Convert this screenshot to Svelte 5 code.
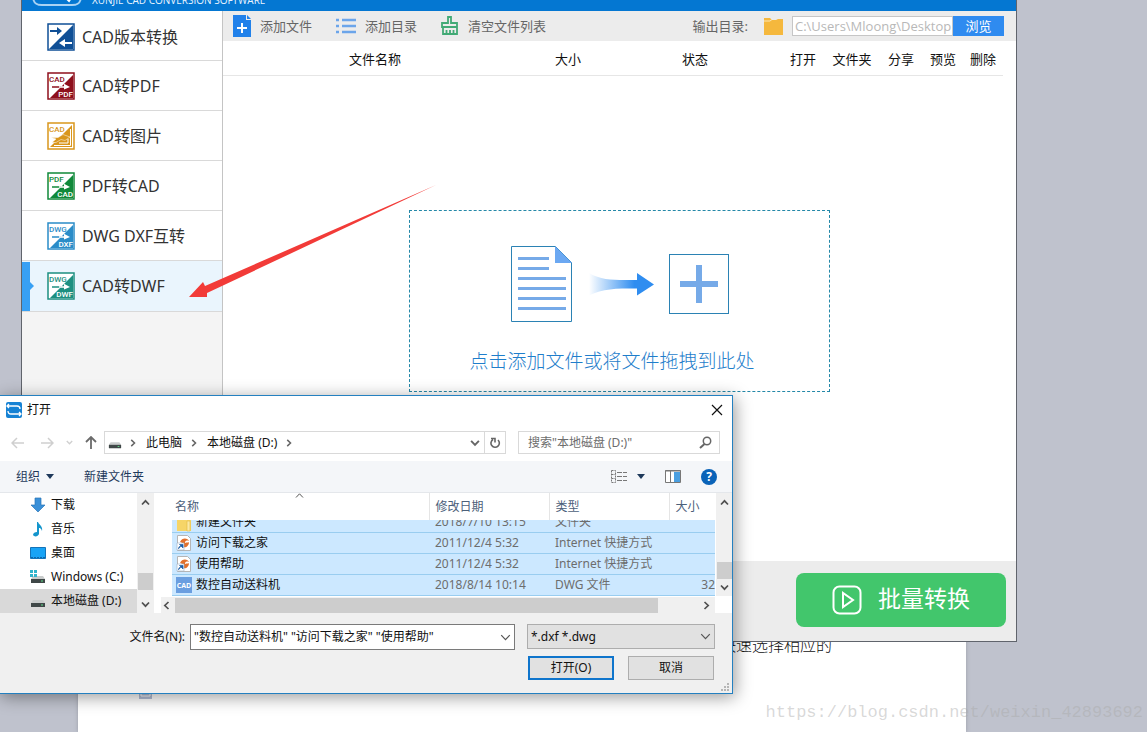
<script>
  const modes = [
    { label: 'CAD版本转换', color: '#0f4f96', kind: 'swap' },
    { label: 'CAD转PDF', color: '#8e0f1c', from: 'CAD', to: 'PDF' },
    { label: 'CAD转图片', color: '#d9961c', from: 'CAD', kind: 'image' },
    { label: 'PDF转CAD', color: '#10893a', from: 'PDF', to: 'CAD' },
    { label: 'DWG DXF互转', color: '#2a8cc8', from: 'DWG', to: 'DXF' },
    { label: 'CAD转DWF', color: '#1d8f80', from: 'DWG', to: 'DWF' }
  ];
  let active = $state(5);

  const columns = ['文件名称', '大小', '状态', '打开', '文件夹', '分享', '预览', '删除'];

  const places = [
    { label: '下载', icon: 'download' },
    { label: '音乐', icon: 'music' },
    { label: '桌面', icon: 'desktop' },
    { label: 'Windows (C:)', icon: 'system' },
    { label: '本地磁盘 (D:)', icon: 'drive' }
  ];
  let place = $state(4);

  const files = [
    { name: '新建文件夹', date: '2018/7/10 13:15', type: '文件夹', size: '', icon: 'folder' },
    { name: '访问下载之家', date: '2011/12/4 5:32', type: 'Internet 快捷方式', size: '', icon: 'link' },
    { name: '使用帮助', date: '2011/12/4 5:32', type: 'Internet 快捷方式', size: '', icon: 'link' },
    { name: '数控自动送料机', date: '2018/8/14 10:14', type: 'DWG 文件', size: '32', icon: 'cad' }
  ];

  let outputDir = $state('C:\\Users\\Mloong\\Desktop');
  let fileName = $state('"数控自动送料机" "访问下载之家" "使用帮助"');
</script>

{#snippet chevron(dir, size = 9)}
  <svg class="chev {dir}" width={size} height={size} viewBox="0 0 9 9" aria-hidden="true">
    <path d="M1 2.5 4.5 6.2 8 2.5" fill="none" stroke="currentColor" stroke-width="1.7" />
  </svg>
{/snippet}

{#snippet drive()}
  <path d="M3 7h10l2 3H1z" fill="#c9cccc" />
  <path d="M1 10h14v4H1z" fill="#3f4747" />
  <path d="M11 12h2" stroke="#5fe08a" stroke-width="1" />
{/snippet}

<div class="desktop">
  <div class="paper">
    <p>快速选择相应的</p>
    <svg class="anchor" width="13" height="7" viewBox="0 0 13 7" aria-hidden="true">
      <path d="M0 0h13v7H0z" fill="#b3bed6" /><path d="M2 2v2h9V2" fill="none" stroke="#fff" />
    </svg>
  </div>

  <main class="app">
    <header class="brand">
      <svg width="50" height="11" viewBox="0 0 50 11" aria-hidden="true">
        <path d="M1-4C1 3 4 5 10 5h30c6 0 9-2 9-9" fill="none" stroke="#a9d2f3" stroke-width="2" />
        <path d="M33-3l4 4 2-3" fill="none" stroke="#fff" stroke-width="2" />
      </svg>
      <span>XUNJIE CAD CONVERSION SOFTWARE</span>
    </header>

    <div class="body">
      <nav class="modes">
        {#each modes as m, i}
          <button class="mode" class:active={active === i} onclick={() => (active = i)}>
            <svg width="28" height="28" viewBox="0 0 28 28" aria-hidden="true">
              <rect x="1" y="1" width="26" height="26" fill="#fff" stroke={m.color} stroke-width="1.5" />
              {#if m.kind === 'swap'}
                <path d="M26 2v24H2z" fill={m.color} />
                <path d="M3 7h7V4l5 4-5 4V9H3z" fill={m.color} />
                <path d="M25 19h-7v-3l-6 4 6 4v-3h7z" fill="#fff" />
              {:else if m.kind === 'image'}
                <path d="M25 3v22H3z" fill={m.color} />
                <path d="M23.500 7v16.500H7M21 17v4H12" fill="none" stroke="#fff" />
                <path d="M4 15.500h7l5-3 7 2.500-5 3.500-4-1-5 3H5l4-3.500z" fill={m.color} stroke="#fff" stroke-width=".5" />
                <text x="2" y="9.500" fill={m.color}>{m.from}</text>
              {:else}
                <path d="M26 3v23H3z" fill={m.color} />
                <path d="M5 15h9" stroke={m.color} stroke-width="1.500" />
                <path d="M12 14.300h5v-2.600l6 3.300-6 2.500v-1.800h-5z" fill="#fff" />
                <text x="2" y="9.500" fill={m.color}>{m.from}</text>
                <text x="26" y="25" text-anchor="end" fill="#fff">{m.to}</text>
              {/if}
            </svg>
            <span>{m.label}</span>
          </button>
        {/each}
      </nav>

      <section class="work">
        <div class="toolbar">
          <button>
            <svg width="18" height="22" viewBox="0 0 18 22" aria-hidden="true">
              <path d="M0 0h13v5h5v17H0z" fill="#2181ea" /><path d="M14 0l4 4h-4z" fill="#2181ea" />
              <path d="M9 8v10M4 13h10" stroke="#fff" stroke-width="2" />
            </svg>添加文件
          </button>
          <button>
            <svg width="20" height="16" viewBox="0 0 20 16" aria-hidden="true">
              <path d="M0 2h3M0 8h3M0 14h3M6 2h14M6 8h14M6 14h14" stroke="#6ba5ea" stroke-width="2.500" />
            </svg>添加目录
          </button>
          <button>
            <svg width="18" height="20" viewBox="0 0 18 20" aria-hidden="true">
              <path d="M7 7V1h3v6h6v4H1V7zM2 11v7h14v-7M5.500 18v-4M9 18v-4M12.500 18v-4" fill="none" stroke="#42aa76" stroke-width="1.800" />
            </svg>清空文件列表
          </button>
          <label class="out" for="outdir">输出目录:</label>
          <svg class="folder" width="20" height="17" viewBox="0 0 20 17" aria-hidden="true">
            <path d="M0 2V0h6l2 2h4l2-1h5v16H0z" fill="#f5b83d" /><path d="M0 3h6l2-1.500" fill="none" stroke="#fde6b4" />
          </svg>
          <input id="outdir" bind:value={outputDir} />
          <button class="browse">浏览</button>
        </div>

        <table class="queue">
          <colgroup>
            <col /><col class="c-size" /><col class="c-state" /><col class="c-open" /><col class="c-dir" />
            <col class="c-open" /><col class="c-view" /><col class="c-view" />
          </colgroup>
          <thead><tr>{#each columns as c}<th>{c}</th>{/each}</tr></thead>
        </table>

        <div class="stage">
          <button class="drop">
            <svg width="220" height="78" viewBox="0 0 220 78" aria-hidden="true">
              <defs>
                <linearGradient id="fade"><stop offset="0" stop-color="#2f8df0" stop-opacity="0" /><stop offset=".7" stop-color="#2f8df0" /></linearGradient>
              </defs>
              <path d="M2 1.500h43.500l16 16v59h-60v-75z" fill="#fff" stroke="#2b82b4" />
              <path d="M45 1l17 17H45z" fill="#6ba8f2" />
              <path d="M8 13.500h31M8 23.500h31M8 33.500h48M8 43.500h48M8 53.500h48M8 63.500h48" stroke="#76aae8" stroke-width="3" />
              <path d="M79 28c14 8 26 7 48 7v-7l17 11.500-17 11v-7c-22 0-34 0-48 7z" fill="url(#fade)" />
              <rect x="159.500" y="9.500" width="59" height="59" fill="#fff" stroke="#2b82b4" />
              <path d="M189 20v38M170 39h38" stroke="#76aae8" stroke-width="6" />
            </svg>
            <span>点击添加文件或将文件拖拽到此处</span>
          </button>
        </div>

        <footer class="actions">
          <button class="convert">
            <svg width="30" height="30" viewBox="0 0 30 30" fill="none" stroke="#fff" stroke-width="2" aria-hidden="true">
              <rect x="1.500" y="1.500" width="27" height="27" rx="6" /><path d="M11 8v14l10-7z" />
            </svg>
            <span>批量转换</span>
          </button>
        </footer>
      </section>
    </div>
  </main>

  <svg class="pointer" width="250" height="116" viewBox="0 0 250 116" aria-hidden="true">
    <path d="M1 113 15 98l2 4L248 1 19 109v4z" fill="#f23b38" />
  </svg>

  <div class="watermark">https://blog.csdn.net/weixin_42893692</div>

  <section class="dialog" role="dialog" aria-labelledby="dlg-title">
    <header class="title">
      <svg width="16" height="16" viewBox="0 0 16 16" aria-hidden="true">
        <rect width="16" height="16" rx="2" fill="#1682d4" />
        <path d="M3 2 1 4l2 2M1 4h10c2 0 3 1 3 3M13 10l2 2-2 2M15 12H5c-2 0-3-1-3-3" fill="none" stroke="#fff" stroke-width="1.300" />
      </svg>
      <h1 id="dlg-title">打开</h1>
      <button class="close" aria-label="关闭">
        <svg width="12" height="12" viewBox="0 0 12 12"><path d="M1 1l10 10M11 1 1 11" stroke="#111" stroke-width="1.200" /></svg>
      </button>
    </header>

    <div class="address">
      <div class="history">
        <button aria-label="后退"><svg width="13" height="12" viewBox="0 0 13 12"><path d="M6 1 1 6l5 5M1 6h12" fill="none" stroke="#cfcfcf" stroke-width="1.500" /></svg></button>
        <button aria-label="前进"><svg width="13" height="12" viewBox="0 0 13 12"><path d="M7 1l5 5-5 5M12 6H0" fill="none" stroke="#cfcfcf" stroke-width="1.500" /></svg></button>
        <button class="faint" aria-label="最近位置">{@render chevron('down', 7)}</button>
        <button aria-label="向上"><svg width="12" height="13" viewBox="0 0 12 13"><path d="M1 6l5-5 5 5M6 1v12" fill="none" stroke="#6b6b6b" stroke-width="1.800" /></svg></button>
      </div>
      <div class="path">
        <svg width="14" height="16" viewBox="0 0 16 16" aria-hidden="true">{@render drive()}</svg>
        {@render chevron('right', 8)}<span>此电脑</span>
        {@render chevron('right', 8)}<span>本地磁盘 (D:)</span>
        {@render chevron('right', 8)}
        <button class="drop-path" aria-label="展开">{@render chevron('down', 10)}</button>
        <button class="refresh" aria-label="刷新">
          <svg width="11" height="12" viewBox="0 0 11 12"><path d="M3 2.500A4.200 4.200 0 1 0 8 3M1 1.500h4v4" fill="none" stroke="#666" stroke-width="1.600" /></svg>
        </button>
      </div>
      <div class="search">
        <input aria-label="搜索" placeholder={'搜索"本地磁盘 (D:)"'} />
        <svg width="13" height="13" viewBox="0 0 13 13" aria-hidden="true"><circle cx="8" cy="5" r="3.700" fill="none" stroke="#666" stroke-width="1.500" /><path d="M5.500 8 1 12" stroke="#666" stroke-width="2" /></svg>
      </div>
    </div>

    <div class="commands">
      <button>组织<i class="tri"></i></button>
      <button>新建文件夹</button>
      <button class="views" aria-label="视图">
        <svg width="17" height="13" viewBox="0 0 17 13"><path d="M.5.5h4v12h-4zM.5 4.500h4M.5 8.500h4" fill="none" stroke="#777" stroke-dasharray="2 1" /><path d="M6 2.500h5M12 2.500h4M6 6.500h5M12 6.500h4M6 10.500h5M12 10.500h4" stroke="#777" /></svg>
        <i class="tri"></i>
      </button>
      <button aria-label="预览窗格"><svg width="16" height="13" viewBox="0 0 16 13"><path d="M.5.5h15v12H.5z" fill="#fff" stroke="#777" /><path d="M0 1h16M5.500 1v11" stroke="#777" /><path d="M9 2h6v10H9z" fill="#4a9fe0" /></svg></button>
      <button class="help" aria-label="帮助">?</button>
    </div>

    <div class="browser">
      <nav class="places">
        {#each places as p, i}
          <button class:current={place === i} onclick={() => (place = i)}>
            <svg width="16" height="16" viewBox="0 0 16 16" aria-hidden="true">
              {#if p.icon === 'download'}
                <path d="M5 1h6v7h4l-7 7-7-7h4z" fill="#3a90d8" stroke="#2a75b8" stroke-width=".7" />
              {:else if p.icon === 'music'}
                <path d="M8 1c1 3 5 4 4 9-1-3-2-3-3-3v6c-1 3-5 3-6 1 0-2 2-3 4-3V1z" fill="#1495cc" />
              {:else if p.icon === 'desktop'}
                <path d="M.5 2.500h15v11H.5z" fill="#18a3f5" stroke="#1473b8" /><path d="M1 12.500h14" stroke="#0c67ab" stroke-dasharray="2 1" />
              {:else}
                {@render drive()}
                {#if p.icon === 'system'}<path d="M0 1h3v3H0zM4 1h3v3H4zM0 5h3v3H0zM4 5h3v3H4z" fill="#31b4cc" />{/if}
              {/if}
            </svg>
            <span>{p.label}</span>
          </button>
        {/each}
      </nav>
      <div class="vbar">{@render chevron('up')}<i></i>{@render chevron('down')}</div>

      <div class="files">
        <span class="sort">{@render chevron('up thin')}</span>
        <table>
          <colgroup><col /><col class="f-mid" /><col class="f-mid" /><col class="f-size" /></colgroup>
          <thead><tr><th>名称</th><th>修改日期</th><th>类型</th><th>大小</th></tr></thead>
          <tbody>
            {#each files as f, i}
              <tr class:cut={i === 0}>
                <td><div class="cell name">
                  <svg width="16" height="16" viewBox="0 0 16 16" aria-hidden="true">
                    {#if f.icon === 'folder'}
                      <path d="M1 1h9l1 2h4v12H1z" fill="#f6d568" /><path d="M11 5h3v10h-3z" fill="#fbe9a4" stroke="#e3b83c" stroke-width=".6" />
                    {:else if f.icon === 'link'}
                      <path d="M1.500.5h10l3 3v12h-13z" fill="#fff" stroke="#b5b5b5" />
                      <path d="M4 7c2-5 8-4 9-1-3-1-4 0-4 2 2-1 3 0 4-1 0 4-3 6-6 5 1-2 1-4-3-5z" fill="#e2702c" />
                      <path d="M1 8h7v7H1z" fill="#fff" stroke="#9bb0c8" stroke-width=".6" /><path d="M2.500 14c0-2 1-3 3-3M3.500 9.500H7V13z" stroke="#1e5fa8" fill="#1e5fa8" stroke-width=".7" />
                    {:else}
                      <path d="M0 0h16v16H0z" fill="#6a9ee0" /><text class="badge" x="8" y="11" text-anchor="middle" fill="#fff">CAD</text>
                    {/if}
                  </svg><span>{f.name}</span>
                </div></td>
                <td><div class="cell">{f.date}</div></td>
                <td><div class="cell">{f.type}</div></td>
                <td><div class="cell size">{f.size}</div></td>
              </tr>
            {/each}
          </tbody>
        </table>
        <div class="hbar">{@render chevron('left')}<i></i>{@render chevron('right')}</div>
      </div>
      <div class="vbar right">{@render chevron('up')}<i></i>{@render chevron('down')}</div>
    </div>

    <footer class="confirm">
      <div class="fields">
        <label for="fname">文件名(N):</label>
        <div class="combo"><input id="fname" bind:value={fileName} />{@render chevron('down thin', 11)}</div>
        <div class="filter">
          <select aria-label="文件类型"><option>*.dxf *.dwg</option></select>
          {@render chevron('down thin', 11)}
        </div>
      </div>
      <div class="buttons">
        <button class="primary">打开(O)</button>
        <button>取消</button>
      </div>
      <svg class="grip" width="8" height="8" viewBox="0 0 8 8" aria-hidden="true"><path d="M6 0h2v2H6zM3 3h2v2H3zM6 3h2v2H6zM0 6h2v2H0zM3 6h2v2H3zM6 6h2v2H6z" fill="#b5b5b5" /></svg>
    </footer>
  </section>
</div>

<style>
  :global(body) { margin: 0; }
  .desktop, .desktop * { box-sizing: border-box; }
  .desktop {
    position: relative;
    height: 100vh;
    overflow: hidden;
    background: #bfc2cd;
    color: #111;
    font: 12px/20px "Noto Sans", "Noto Sans CJK SC", sans-serif;
  }
  button, input, select { font: inherit; color: inherit; margin: 0; padding: 0; border: 0; background: none; border-radius: 0; outline: 0; }
  button { display: flex; align-items: center; white-space: nowrap; }
  svg { display: block; flex: none; }

  .paper { position: absolute; left: 78px; right: 181px; top: 0; bottom: 0; background: #fff; box-shadow: 0 0 4px #9a9da8; }
  .paper p { position: absolute; right: 134px; top: 633px; margin: 0; font-size: 16px; line-height: 24px; font-weight: 300; color: #111; }
  .anchor { position: absolute; left: 61px; top: 692px; }
  .watermark { position: absolute; right: 4px; bottom: 7px; font: 17px/24px "Liberation Mono", monospace; color: rgba(170, 170, 170, .45); }

  .app {
    position: absolute; left: 21px; right: 130px; top: 0; bottom: 90px;
    display: flex; flex-direction: column;
    border: 1px solid #60646c; border-top: 0; background: #fff;
  }
  .brand { display: flex; height: 11px; padding-left: 10px; gap: 10px; background: #0477d2; overflow: hidden; }
  .brand span { font-family: "Open Sans", sans-serif; font-size: 10px; line-height: 14px; margin-top: -7px; color: #e8f4ff; white-space: nowrap; }
  .body { flex: 1; display: flex; min-height: 0; }

  .modes { width: 201px; flex: none; background: #f4f4f4; border-right: 1px solid #c4c4c4; }
  .mode {
    position: relative; width: 100%; height: 50px; padding-left: 25px; gap: 7px;
    background: #fff; border-bottom: 1px solid #d9d9d9; font-size: 16px; color: #333;
  }
  .mode:first-child { padding-top: 2px; }
  .mode.active { height: 51px; background: #eaf5fd; }
  .mode.active::before { content: ""; position: absolute; left: 0; top: 1px; bottom: 0; width: 8px; background: #38a0f4; }
  .mode.active::after { content: ""; position: absolute; left: 8px; top: 21px; border: 4px solid transparent; border-left-color: #38a0f4; border-right: 0; }
  .mode text { font: 500 8px Roboto, sans-serif; }

  .work { flex: 1; min-width: 0; display: flex; flex-direction: column; }
  .toolbar { display: flex; align-items: center; height: 30px; padding: 0 12px 0 10px; gap: 24px; background: #ececec; font-size: 13px; color: #666; }
  .toolbar button { gap: 9px; }
  .out { margin-left: auto; }
  .folder { margin-left: -8px; }
  .toolbar input { width: 161px; height: 20px; margin: 0 -24px 0 -16px; padding: 0 0 0 2px; border: 1px solid #c6c6c6; background: #fff; color: #b8b8b8; font-family: "Open Sans", sans-serif; }
  .toolbar .browse { width: 51px; height: 20px; justify-content: center; background: #2f8bf0; color: #fff; }

  .queue { width: calc(100% - 13px); table-layout: fixed; border-collapse: collapse; font-size: 13px; }
  .queue th { height: 34px; padding: 2px 0 0; border-bottom: 1px solid #e6e6e6; font-weight: 400; text-align: center; white-space: nowrap; }
  .c-size { width: 82px; } .c-state { width: 172px; } .c-open { width: 44px; } .c-dir { width: 54px; } .c-view { width: 40px; }

  .stage { flex: 1; display: flex; align-items: center; justify-content: center; padding-bottom: 34px; }
  .drop { width: 53%; height: 182px; flex-direction: column; justify-content: center; gap: 24px; padding-top: 17px; border: 1px dashed #2488a8; }
  .drop span { padding-right: 15px; font-size: 19px; line-height: 28px; color: #1f7ecb; font-weight: 300; }

  .actions { display: flex; justify-content: flex-end; height: 80px; padding: 12px 10px; background: #ececec; }
  .convert { width: 210px; height: 54px; justify-content: center; gap: 16px; border-radius: 8px; background: #42c66c; color: #fff; font-size: 23px; }
  .convert span { line-height: 28px; padding-bottom: 4px; }

  .pointer { position: absolute; left: 188px; top: 184px; }

  .dialog {
    position: absolute; left: -1px; right: 414px; top: 395px;
    border: 1px solid #2480c0; background: #fff; box-shadow: 2px 3px 16px rgba(0, 0, 0, .4);
  }
  .title { display: flex; align-items: center; height: 28px; padding: 0 9px 0 6px; gap: 5px; }
  .title h1 { margin: 0; font-size: 12px; font-weight: 400; }
  .close { margin-left: auto; }

  .address { display: flex; align-items: center; height: 37px; padding: 0 12px 0 11px; }
  .history { display: grid; grid-template-columns: 30px 25px 19px 19px; align-items: center; }
  .faint { color: #d0d0d0; }
  .path, .search { display: flex; align-items: center; height: 23px; border: 1px solid #d9d9d9; }
  .path { flex: 1; gap: 7px; padding-left: 3px; color: #666; }
  .path span { color: #111; margin: 0 1px 0 2px; white-space: nowrap; }
  .drop-path { margin-left: auto; }
  .refresh { width: 21px; height: 100%; justify-content: center; margin-left: -3px; border-left: 1px solid #d9d9d9; }
  .search { width: 202px; margin-left: 12px; padding: 0 7px 0 9px; }
  .search input { flex: 1; min-width: 0; }
  .search input::placeholder { color: #6d6d6d; opacity: 1; }

  .chev { overflow: visible; }
  .up { rotate: 180deg; } .right.chev { rotate: -90deg; } .left { rotate: 90deg; }
  .thin { color: #555; }
  .thin path { stroke-width: 1; }

  .commands { display: flex; align-items: center; height: 32px; padding: 0 15px 0 16px; background: #f4f6f9; border-bottom: 1px solid #e4e7eb; color: #1e395b; }
  .commands button + button { margin-left: 20px; }
  .commands button:nth-child(2) { margin-left: 30px; }
  .commands .views { margin-left: auto; gap: 3px; }
  .tri { margin-left: 6px; border: 4px solid transparent; border-top: 5px solid #1e395b; border-bottom: 0; }
  .commands .help { width: 16px; height: 16px; justify-content: center; border-radius: 50%; background: #0a63b8; color: #fff; font-weight: 700; line-height: 16px; }

  .browser { display: flex; height: 120px; }
  .places { width: 137px; flex: none; }
  .places button { width: 100%; height: 24px; padding-left: 30px; gap: 5px; }
  .places .current { background: #d9d9d9; }
  .vbar { display: flex; flex-direction: column; align-items: center; width: 17px; flex: none; padding: 5px 0 4px; background: #f0f0f0; color: #505050; }
  .vbar i { width: 15px; height: 17px; margin: auto 0 10px; background: #cdcdcd; }
  .vbar.right { width: 16px; height: 103px; margin-left: 1px; }
  .vbar.right i { margin-bottom: 4px; }

  .files { position: relative; flex: 1; min-width: 0; padding-left: 7px; overflow: hidden; }
  .sort { position: absolute; left: 141px; top: -2px; }
  .files table { width: calc(100% - 11px); margin-left: 11px; table-layout: fixed; border-collapse: collapse; }
  .f-mid { width: 120px; } .f-size { width: 46px; }
  .files th { height: 27px; padding: 0 0 0 6px; border-left: 1px solid #e5e5e5; text-align: left; font-weight: 400; color: #4c607a; }
  .files th:first-child { padding-left: 3px; border: 0; }
  .files td { padding: 0 0 0 6px; background: #cce8ff; border-bottom: 1px solid #99cdf0; color: #6d6d6d; }
  .files td:first-child { padding-left: 4px; }
  .files td:last-child { padding: 0; }
  .cell { display: flex; align-items: center; height: 20px; white-space: nowrap; overflow: hidden; }
  .cut .cell { height: 12px; align-items: flex-end; }
  .name { gap: 4px; color: #111; }
  .size { justify-content: flex-end; }
  .badge { font: 700 7px "Open Sans", sans-serif; }
  .hbar { display: flex; align-items: center; height: 17px; margin-top: 1px; padding: 0 4px 0 1px; background: #f0f0f0; color: #505050; }
  .hbar i { width: 88%; height: 15px; margin: 0 auto 0 4px; background: #cdcdcd; }

  .confirm { position: relative; padding: 11px 17px 13px; background: #f0f0f0; }
  .fields { display: flex; align-items: flex-start; }
  .fields label { width: 173px; padding-right: 5px; line-height: 26px; text-align: right; }
  .combo { flex: 1; display: flex; align-items: center; height: 26px; padding: 0 3px; border: 1px solid #7a7a7a; background: #fff; }
  .combo input { flex: 1; min-width: 0; }
  .filter { display: grid; align-items: center; width: 188px; height: 25px; margin-left: 12px; border: 1px solid #adadad; background: #e1e1e1; }
  .filter select { grid-area: 1 / 1; width: 100%; height: 100%; padding: 0 3px; appearance: none; }
  .filter :global(svg) { grid-area: 1 / 1; justify-self: end; margin-right: 3px; pointer-events: none; }
  .buttons { display: flex; justify-content: flex-end; gap: 14px; margin-top: 6px; padding-right: 1px; }
  .buttons button { width: 86px; height: 24px; justify-content: center; border: 1px solid #adadad; background: #e1e1e1; }
  .buttons .primary { border: 2px solid #0f75cc; }
  .grip { position: absolute; right: 3px; bottom: 2px; }
</style>
